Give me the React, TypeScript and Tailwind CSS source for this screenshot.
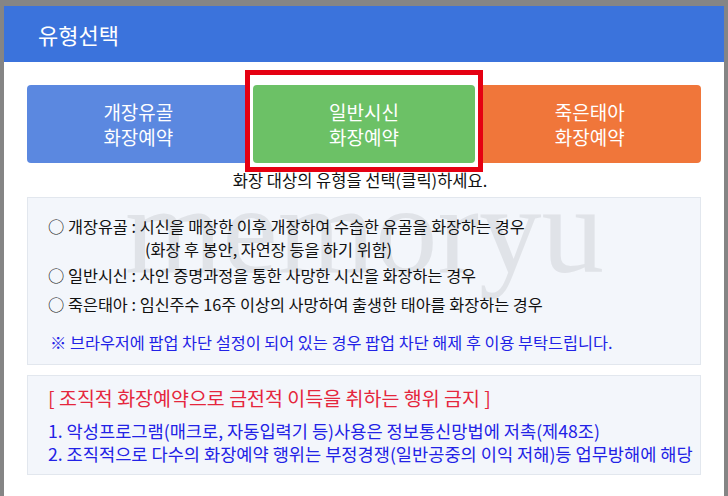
import React from "react";

const font = { fontFamily: '"Noto Sans CJK KR", "Noto Sans", sans-serif' };

const types = [
  { id: "bone", label: ["개장유골", "화장예약"], color: "bg-[#5b88e0]" },
  { id: "body", label: ["일반시신", "화장예약"], color: "bg-[#6cc166]" },
  { id: "fetus", label: ["죽은태아", "화장예약"], color: "bg-[#f0763a]" },
];

export default function App() {
  return (
    <div className="min-h-screen bg-[#858585] pt-[6px] px-[4px]" style={font}>
      <div className="bg-white h-[490px] overflow-hidden">
        <div className="h-[56px] bg-[#3b73dc] flex items-center pl-[34px] text-white text-[22px]">
          유형선택
        </div>

        <div className="px-[23px] pt-[23px]">
          <div className="flex gap-[3px]">
            {types.map((t) => (
              <div key={t.id} className="relative flex-1">
                {t.id === "body" && (
                  <div className="absolute left-[-8px] right-[-8px] top-[-15px] bottom-[-9px] border-[5px] border-[#e50012] z-10"></div>
                )}
                <button
                  className={`${t.color} w-full h-[78px] rounded-[4px] text-white text-[19px] leading-[25px] flex flex-col items-center justify-center`}
                >
                  <span>{t.label[0]}</span>
                  <span>{t.label[1]}</span>
                </button>
              </div>
            ))}
          </div>

          <p className="text-center text-[16.5px] leading-[34px] text-[#111] h-[34px] -ml-[8px] whitespace-nowrap">
            화장 대상의 유형을 선택(클릭)하세요.
          </p>

          <div className="relative h-[168px] bg-[#f3f6fb] border border-[#e2e7ee] pl-[20px] pt-[16px] text-[16.3px] text-[#111] whitespace-nowrap">
            <div
              className="absolute left-[97px] top-[-30px] text-[125px] leading-none text-[#e0e3e8] select-none"
              style={{ fontFamily: '"Liberation Serif", serif' }}
            >
              memoryu
            </div>
            <div className="relative">
              <p className="leading-[24px]">○ 개장유골 : 시신을 매장한 이후 개장하여 수습한 유골을 화장하는 경우</p>
              <p className="leading-[22px] pl-[97px]">(화장 후 봉안, 자연장 등을 하기 위함)</p>
              <p className="leading-[24px] mt-[3px]">○ 일반시신 : 사인 증명과정을 통한 사망한 시신을 화장하는 경우</p>
              <p className="leading-[24px] mt-[5px]">○ 죽은태아 : 임신주수 16주 이상의 사망하여 출생한 태아를 화장하는 경우</p>
              <p className="leading-[24px] mt-[14px] pl-[2px] text-[#2222e6]">
                ※ 브라우저에 팝업 차단 설정이 되어 있는 경우 팝업 차단 해제 후 이용 부탁드립니다.
              </p>
            </div>
          </div>

          <div className="mt-[10px] h-[100px] bg-[#f3f6fb] border border-[#e2e7ee] pl-[20px] pt-[9px] whitespace-nowrap">
            <p className="text-[19.5px] leading-[26px] text-[#e5263d]">
              [ 조직적 화장예약으로 금전적 이득을 취하는 행위 금지 ]
            </p>
            <div className="mt-[8px] text-[17.6px] leading-[23px] text-[#2222e6]">
              <p>1. 악성프로그램(매크로, 자동입력기 등)사용은 정보통신망법에 저촉(제48조)</p>
              <p>2. 조직적으로 다수의 화장예약 행위는 부정경쟁(일반공중의 이익 저해)등 업무방해에 해당</p>
            </div>
          </div>
        </div>
      </div>
    </div>
  );
}
